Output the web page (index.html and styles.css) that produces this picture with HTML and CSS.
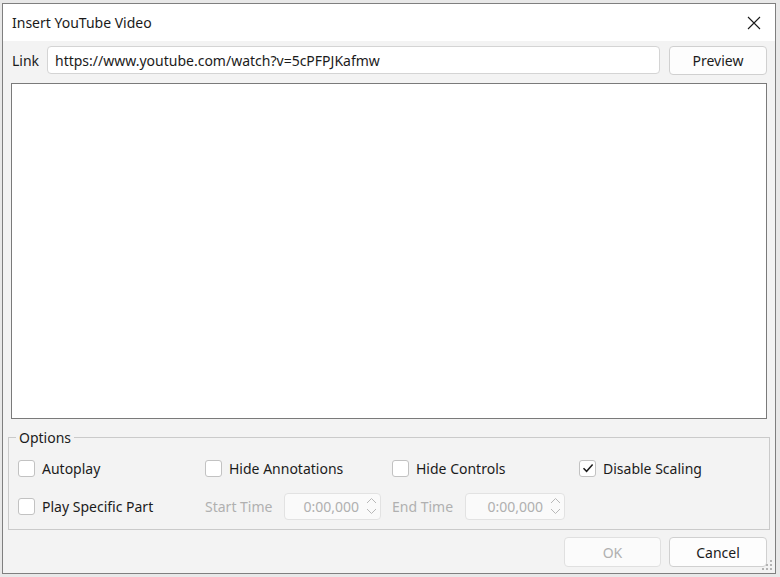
FILE: index.html
```html
<!DOCTYPE html>
<html lang="en">
<head>
    <meta charset="UTF-8">
    <title>Insert YouTube Video</title>
    <link rel="stylesheet" href="styles.css">
</head>
<body>
    <div class="window">
        <div class="titlebar">
            <span class="title">Insert YouTube Video</span>
            <span class="close">
                <svg width="14" height="14" viewBox="0 0 14 14"><path d="M1 1 L13 13 M13 1 L1 13" stroke="#1a1a1a" stroke-width="1.1" fill="none"/></svg>
            </span>
        </div>
        <div class="content">
            <div class="link-row">
                <label class="link-label" for="link">Link</label>
                <input class="link-input" id="link" type="text" value="https://www.youtube.com/watch?v=5cPFPJKafmw">
                <button class="btn preview-btn">Preview</button>
            </div>
            <div class="preview"></div>
            <fieldset class="options">
                <legend>Options</legend>
                <div class="opt-row">
                    <label class="check"><span class="box"></span>Autoplay</label>
                    <label class="check"><span class="box"></span>Hide Annotations</label>
                    <label class="check"><span class="box"></span>Hide Controls</label>
                    <label class="check"><span class="box checked"><svg width="14" height="14" viewBox="0 0 14 14"><path d="M2.5 7.2 L5.6 10.3 L11.6 3.6" stroke="#1b1b1b" stroke-width="1.5" fill="none"/></svg></span>Disable Scaling</label>
                </div>
                <div class="opt-row">
                    <label class="check"><span class="box"></span>Play Specific Part</label>
                    <div class="time-group">
                        <span class="time-label start">Start Time</span>
                        <div class="spin start-spin"><span class="spin-value">0:00,000</span><span class="arrows">
                            <svg width="11" height="20" viewBox="0 0 11 20"><path d="M1 7 L5.5 2.5 L10 7 M1 13 L5.5 17.5 L10 13" stroke="#b8b8b8" stroke-width="1" fill="none"/></svg>
                        </span></div>
                    </div>
                    <div class="time-group">
                        <span class="time-label end">End Time</span>
                        <div class="spin end-spin"><span class="spin-value">0:00,000</span><span class="arrows">
                            <svg width="11" height="20" viewBox="0 0 11 20"><path d="M1 7 L5.5 2.5 L10 7 M1 13 L5.5 17.5 L10 13" stroke="#b8b8b8" stroke-width="1" fill="none"/></svg>
                        </span></div>
                    </div>
                </div>
            </fieldset>
            <div class="footer">
                <button class="btn ok-btn" disabled>OK</button>
                <button class="btn cancel-btn">Cancel</button>
            </div>
        </div>
        <svg class="grip" width="12" height="12" viewBox="0 0 12 12">
            <rect x="8" y="0" width="2" height="2" fill="#b4b4b4"/>
            <rect x="4" y="4" width="2" height="2" fill="#b4b4b4"/>
            <rect x="8" y="4" width="2" height="2" fill="#b4b4b4"/>
            <rect x="0" y="8" width="2" height="2" fill="#b4b4b4"/>
            <rect x="4" y="8" width="2" height="2" fill="#b4b4b4"/>
            <rect x="8" y="8" width="2" height="2" fill="#b4b4b4"/>
        </svg>
    </div>
</body>
</html>
```

FILE: styles.css
```css
body {
    margin: 0;
    background-color: #e8e8e8;
    font-family: "Noto Sans", "Open Sans", sans-serif;
    font-size: 14px;
    color: #1b1b1b;
}
.window {
    position: relative;
    box-sizing: border-box;
    margin: 3px 0 0 2px;
    width: 774px;
    height: 571px;
    border: 1px solid #7f7f7f;
    background-color: #f3f3f3;
    display: flex;
    flex-direction: column;
}
.titlebar {
    height: 37px;
    background-color: #fff;
    display: flex;
    align-items: center;
    justify-content: space-between;
    padding: 0 14px 0 9px;
}
.title {
    color: #1a1a1a;
}
.close {
    display: flex;
}
.content {
    flex: 1;
    display: flex;
    flex-direction: column;
    padding: 5px 5px 0 5px;
}
.link-row {
    display: flex;
    align-items: center;
    height: 28px;
    margin: 0 3px 0 3px;
}
.link-label {
    width: 35px;
    padding-left: 1px;
}
.link-input {
    flex: 1;
    height: 28px;
    box-sizing: border-box;
    border: 1px solid #d4d4d4;
    border-radius: 4px;
    background-color: #fff;
    padding: 0 7px;
    font-family: inherit;
    font-size: 14px;
    color: #1b1b1b;
    outline: none;
}
.btn {
    box-sizing: border-box;
    height: 29px;
    border: 1px solid #d0d0d0;
    border-radius: 4px;
    background-color: #fdfdfd;
    font-family: inherit;
    font-size: 14px;
    color: #1b1b1b;
    padding: 0;
}
.preview-btn {
    width: 98px;
    margin-left: 9px;
}
.preview {
    margin: 9px 3px 0 3px;
    height: 336px;
    box-sizing: border-box;
    border: 1px solid #7a7a7a;
    background-color: #fff;
}
.options {
    margin: 9px 0 0 0;
    padding: 2px 0 0 9px;
    border: 1px solid #cacaca;
    height: 102px;
    box-sizing: border-box;
}
.options legend {
    padding: 0 3px;
    margin-left: -2px;
    color: #1b1b1b;
}
.opt-row {
    display: flex;
    align-items: center;
    height: 38px;
}
.check {
    display: flex;
    align-items: center;
    width: 187px;
    flex-shrink: 0;
}
.box {
    box-sizing: border-box;
    width: 17px;
    height: 17px;
    border: 1px solid #c2c2c2;
    border-radius: 3px;
    background-color: #fff;
    margin-right: 7px;
    display: flex;
    align-items: center;
    justify-content: center;
}
.time-group {
    display: flex;
    align-items: center;
    width: 187px;
    flex-shrink: 0;
}
.time-label {
    color: #b0b0b0;
}
.time-label.start {
    width: 79px;
}
.time-label.end {
    width: 73px;
}
.spin {
    box-sizing: border-box;
    height: 27px;
    border: 1px solid #e2e2e2;
    border-radius: 4px;
    background-color: #fafafa;
    display: flex;
    align-items: center;
    justify-content: flex-end;
    color: #b0b0b0;
}
.start-spin {
    width: 97px;
}
.end-spin {
    width: 100px;
}
.spin-value {
    margin-right: 7px;
}
.arrows {
    display: flex;
    margin-right: 3px;
}
.footer {
    display: flex;
    justify-content: flex-end;
    margin: 7px 3px 0 0;
}
.ok-btn {
    width: 97px;
    height: 30px;
    color: #b0b0b0;
    border-color: #e0e0e0;
    background-color: #fbfbfb;
}
.cancel-btn {
    width: 98px;
    height: 30px;
    margin-left: 8px;
}
.grip {
    position: absolute;
    right: 1px;
    bottom: 1px;
}
```
